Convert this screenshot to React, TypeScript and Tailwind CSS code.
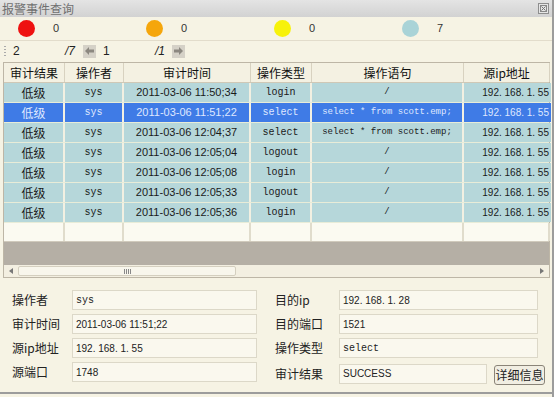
import React from "react";

const cjk = { fontFamily: '"Noto Sans CJK SC", "Liberation Sans", sans-serif' };
const mono = { fontFamily: '"Liberation Mono", "Noto Sans CJK SC", monospace' };
const sans = { fontFamily: '"Liberation Sans", "Noto Sans CJK SC", sans-serif' };

const cols = [
  { title: "审计结果", w: "w-[61px]" },
  { title: "操作者", w: "w-[59px]" },
  { title: "审计时间", w: "w-[127px]" },
  { title: "操作类型", w: "w-[61px]" },
  { title: "操作语句", w: "w-[152px]" },
  { title: "源ip地址", w: "w-[86px]" },
];

const rows = [
  ["11:50;34", "login", "/"],
  ["11:51;22", "select", "select * from scott.emp;"],
  ["12:04;37", "select", "select * from scott.emp;"],
  ["12:05;04", "logout", "/"],
  ["12:05;08", "login", "/"],
  ["12:05;33", "logout", "/"],
  ["12:05;36", "login", "/"],
];

function Dot({ color, count }: { color: string; count: string }) {
  return (
    <div className="flex items-center w-[128px]">
      <div className={`w-[17px] h-[17px] rounded-full ${color}`} />
      <span className="ml-[18px] text-[11px] text-[#333]" style={sans}>
        {count}
      </span>
    </div>
  );
}

function ArrowBtn({ dir }: { dir: "left" | "right" }) {
  return (
    <div className="w-[13px] h-[13px] bg-[#d5d1c7] flex items-center justify-center">
      <svg width="9" height="8" viewBox="0 0 9 8">
        {dir === "left" ? (
          <path d="M0 4 L4 0 L4 2.5 L9 2.5 L9 5.5 L4 5.5 L4 8 Z" fill="#8c8880" />
        ) : (
          <path d="M9 4 L5 0 L5 2.5 L0 2.5 L0 5.5 L5 5.5 L5 8 Z" fill="#8c8880" />
        )}
      </svg>
    </div>
  );
}

function Field({
  label,
  value,
  w,
  lw = "w-[60px]",
  mono: m,
}: {
  label: string;
  value: string;
  w: string;
  lw?: string;
  mono?: boolean;
}) {
  return (
    <div className="flex items-center h-[20px]">
      <span className={`${lw} text-[12px] text-[#222]`} style={cjk}>
        {label}
      </span>
      <div
        className={`${w} h-[20px] bg-[#faf8ee] border border-[#dcd8c8] flex items-center px-[3px] text-[10px] text-[#222] whitespace-pre`}
        style={m ? mono : sans}
      >
        {value}
      </div>
    </div>
  );
}

export default function App() {
  return (
    <div className="w-[554px] h-[397px] bg-[#f6f3e4] border-r-2 border-[#9c9c9c] flex flex-col overflow-hidden">
      {/* title bar */}
      <div className="h-[17px] bg-gradient-to-b from-[#e4e4e4] to-[#d2d2d2] flex items-center justify-between pl-[2px] pr-[3px]">
        <span className="text-[12px] text-[#707070] leading-none" style={cjk}>
          报警事件查询
        </span>
        <div className="w-[11px] h-[11px] border border-[#8e8e8e] bg-[#e6e6e6] flex items-center justify-center">
          <svg width="7" height="7" viewBox="0 0 7 7">
            <rect x="0.5" y="0.5" width="6" height="6" fill="none" stroke="#888" />
            <path d="M1.5 1.5 L5.5 5.5 M5.5 1.5 L1.5 5.5" stroke="#777" />
          </svg>
        </div>
      </div>

      {/* status dots */}
      <div className="h-[24px] flex items-center pl-[18px] border-b border-[#e2dccb]">
        <Dot color="bg-[#ee1111]" count="0" />
        <Dot color="bg-[#f5a60c]" count="0" />
        <Dot color="bg-[#f7f20a]" count="0" />
        <Dot color="bg-[#a9d3d7]" count="7" />
      </div>

      {/* pager */}
      <div className="h-[20px] flex items-center pl-[4px] text-[12px] text-[#222]" style={sans}>
        <div className="flex flex-col gap-[2px] w-[2px]">
          <div className="w-[2px] h-[1px] bg-[#aaa]" />
          <div className="w-[2px] h-[1px] bg-[#aaa]" />
          <div className="w-[2px] h-[1px] bg-[#aaa]" />
          <div className="w-[2px] h-[1px] bg-[#aaa]" />
        </div>
        <span className="ml-[7px] w-[52px]">2</span>
        <span className="w-[18px] italic">/7</span>
        <ArrowBtn dir="left" />
        <span className="ml-[7px] w-[52px]">1</span>
        <span className="w-[17px] italic">/1</span>
        <ArrowBtn dir="right" />
      </div>

      {/* table */}
      <div className="mt-[1px] ml-[3px] w-[547px] border border-[#bdb6a6] flex flex-col">
        <div className="flex h-[20px] bg-[#f4f1e2] border-b border-[#cfc8b6]">
          {cols.map((c, i) => (
            <div
              key={i}
              className={`${c.w} shrink-0 flex items-center justify-center border-r border-[#d8d2c0] text-[12px] text-[#111]`}
              style={cjk}
            >
              {c.title}
            </div>
          ))}
        </div>
        {rows.map((r, i) => {
          const sel = i === 1;
          const bg = sel ? "bg-[#3f7be6]" : "bg-[#b6d7da]";
          const fg = sel ? "text-[#dfe8ff]" : "text-[#1a1a1a]";
          return (
            <div key={i} className={`flex h-[20px] border-b border-[#e8ecd8] ${fg}`}>
              <div className={`w-[61px] shrink-0 ${bg} border-r-2 border-[#f2f0e2] flex items-center justify-center text-[12px]`} style={cjk}>
                低级
              </div>
              <div className={`w-[59px] shrink-0 ${bg} border-r-2 border-[#f2f0e2] flex items-center justify-center text-[10px]`} style={mono}>
                sys
              </div>
              <div className={`w-[127px] shrink-0 ${bg} border-r-2 border-[#f2f0e2] flex items-center justify-center text-[11px]`} style={sans}>
                2011-03-06 {r[0]}
              </div>
              <div className={`w-[61px] shrink-0 ${bg} border-r-2 border-[#f2f0e2] flex items-center justify-center text-[10px]`} style={mono}>
                {r[1]}
              </div>
              <div className={`w-[152px] shrink-0 ${bg} border-r-2 border-[#f2f0e2] flex items-center justify-center text-[9px] whitespace-pre`} style={mono}>
                {r[2]}
              </div>
              <div className={`w-[87px] shrink-0 ${bg} flex items-center justify-end pr-[2px] text-[10px] whitespace-pre`} style={sans}>
                192. 168. 1. 55
              </div>
            </div>
          );
        })}
        <div className="flex h-[18px] bg-[#fbfaf1]">
          {cols.map((c, i) => (
            <div key={i} className={`${c.w} shrink-0 border-r-2 border-[#e0dccc]`} />
          ))}
        </div>
        <div className="h-[24px] bg-[#b5afa5] border-t border-[#d0cabc]" />
        {/* horizontal scrollbar */}
        <div className="h-[12px] bg-[#f3efe1] flex items-center">
          <div className="w-[14px] flex justify-center">
            <svg width="4" height="6" viewBox="0 0 4 6">
              <path d="M4 0 L0 3 L4 6 Z" fill="#777" />
            </svg>
          </div>
          <div className="w-[218px] h-[10px] rounded-[2px] border border-[#d4cfbf] bg-[#f8f6ec] flex items-center justify-center">
            <div className="flex gap-[1px]">
              <div className="w-[1px] h-[5px] bg-[#888]" />
              <div className="w-[1px] h-[5px] bg-[#888]" />
              <div className="w-[1px] h-[5px] bg-[#888]" />
              <div className="w-[1px] h-[5px] bg-[#888]" />
            </div>
          </div>
          <div className="flex-1" />
          <div className="w-[14px] flex justify-center">
            <svg width="4" height="6" viewBox="0 0 4 6">
              <path d="M0 0 L4 3 L0 6 Z" fill="#777" />
            </svg>
          </div>
        </div>
      </div>

      {/* detail form */}
      <div className="flex-1 flex pt-[12px] pl-[12px] border-b-2 border-[#9c9c9c] mb-[3px]">
        <div className="flex flex-col gap-[4px] w-[263px]">
          <Field label="操作者" value="sys" w="w-[185px]" mono />
          <Field label="审计时间" value="2011-03-06 11:51;22" w="w-[185px]" />
          <Field label="源ip地址" value="192. 168. 1. 55" w="w-[185px]" />
          <Field label="源端口" value="1748" w="w-[185px]" />
        </div>
        <div className="flex flex-col gap-[4px] w-[272px]">
          <Field label="目的ip" value="192. 168. 1. 28" w="w-[199px]" lw="w-[64px]" />
          <Field label="目的端口" value="1521" w="w-[199px]" lw="w-[64px]" />
          <Field label="操作类型" value="select" w="w-[199px]" lw="w-[64px]" mono />
          <div className="flex items-center">
            <Field label="审计结果" value="SUCCESS" w="w-[148px]" lw="w-[64px]" />
            <button
              className="ml-[7px] mt-[3px] w-[51px] h-[20px] rounded-[3px] border border-[#8a8478] bg-[#f1eee2] text-[12px] text-[#222] flex items-center justify-center"
              style={cjk}
            >
              详细信息
            </button>
          </div>
        </div>
      </div>
    </div>
  );
}
